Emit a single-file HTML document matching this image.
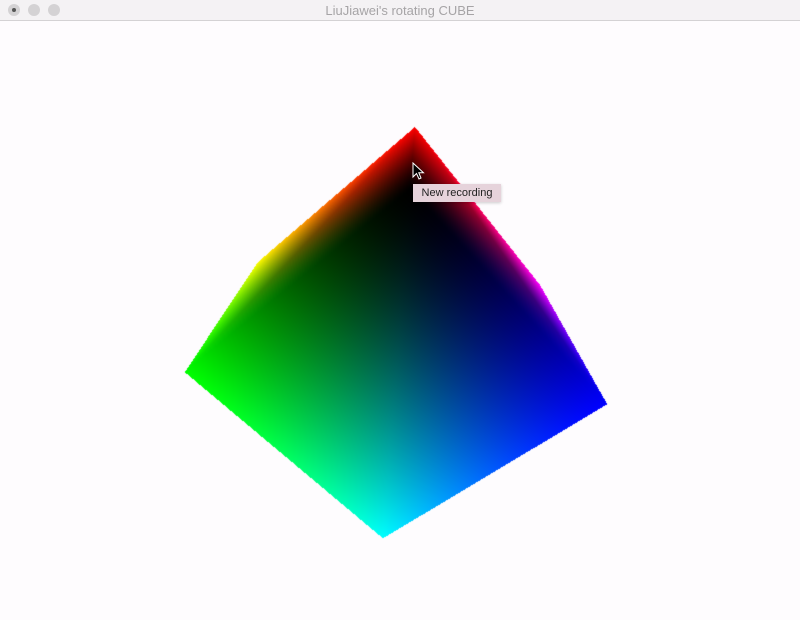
<!DOCTYPE html>
<html><head><meta charset="utf-8"><style>
html,body{margin:0;padding:0;width:800px;height:620px;overflow:hidden;background:#fefcfe;font-family:"Liberation Sans",sans-serif}
#bar{position:absolute;left:0;top:0;width:800px;height:20px;background:#f4f2f4;border-bottom:1px solid #d4d2d4}
.dot{position:absolute;top:4px;width:12px;height:12px;border-radius:50%;background:#d4d2d4}
#title{position:absolute;top:3px;left:0;width:800px;text-align:center;font-size:13px;color:#a6a4a6}
#c{position:absolute;left:0;top:0}
#tip{position:absolute;left:413px;top:184px;width:88px;height:18px;background:#e6d3db;font-size:11px;line-height:18px;text-align:center;color:#222;box-shadow:0 1px 3px rgba(0,0,0,.2)}
</style></head><body>
<canvas id="c" width="800" height="620"></canvas>
<div id="bar"><div class="dot" style="left:8px"></div><div style="position:absolute;left:12px;top:8px;width:4px;height:4px;border-radius:50%;background:#555"></div><div class="dot" style="left:28px"></div><div class="dot" style="left:48px"></div><div id="title">LiuJiawei's rotating CUBE</div></div>
<svg style="position:absolute;left:412px;top:162px" width="14" height="20" viewBox="0 0 14 20"><path d="M1 1 L1 15 L4.5 11.5 L7 17 L9 16 L6.8 10.8 L11.5 10.8 Z" fill="#000" stroke="#fff" stroke-width="1"/></svg>
<div id="tip">New recording</div>
<script>
var c=document.getElementById('c'),x=c.getContext('2d'),im=x.createImageData(800,620),d=im.data;
for(var i=0;i<d.length;i+=4){d[i]=254;d[i+1]=252;d[i+2]=254;d[i+3]=255;}
var K=[410,190,0,0,0],G=[185,372,0,255,0],C=[383,538,0,255,255],B=[607,404,0,0,255],R=[415,127,255,0,0],Y=[258,262,255,255,0],M=[540,285,255,0,255];
function tri(a,b,e){var minx=Math.floor(Math.min(a[0],b[0],e[0])),maxx=Math.ceil(Math.max(a[0],b[0],e[0])),miny=Math.floor(Math.min(a[1],b[1],e[1])),maxy=Math.ceil(Math.max(a[1],b[1],e[1]));
var den=(b[1]-e[1])*(a[0]-e[0])+(e[0]-b[0])*(a[1]-e[1]);
for(var y=miny;y<=maxy;y++)for(var X=minx;X<=maxx;X++){var px=X+.5,py=y+.5;
var l1=((b[1]-e[1])*(px-e[0])+(e[0]-b[0])*(py-e[1]))/den,l2=((e[1]-a[1])*(px-e[0])+(a[0]-e[0])*(py-e[1]))/den,l3=1-l1-l2;
if(l1<-.001||l2<-.001||l3<-.001)continue;var o=(y*800+X)*4;
for(var k=0;k<3;k++){var v=(l1*a[2+k]+l2*b[2+k]+l3*e[2+k])/255;d[o+k]=255*Math.pow(Math.max(0,v),1.5);}}}
tri(K,G,C);tri(K,C,B);tri(R,Y,G);tri(R,G,K);tri(R,K,B);tri(R,B,M);
x.putImageData(im,0,0);
</script>
</body></html>
